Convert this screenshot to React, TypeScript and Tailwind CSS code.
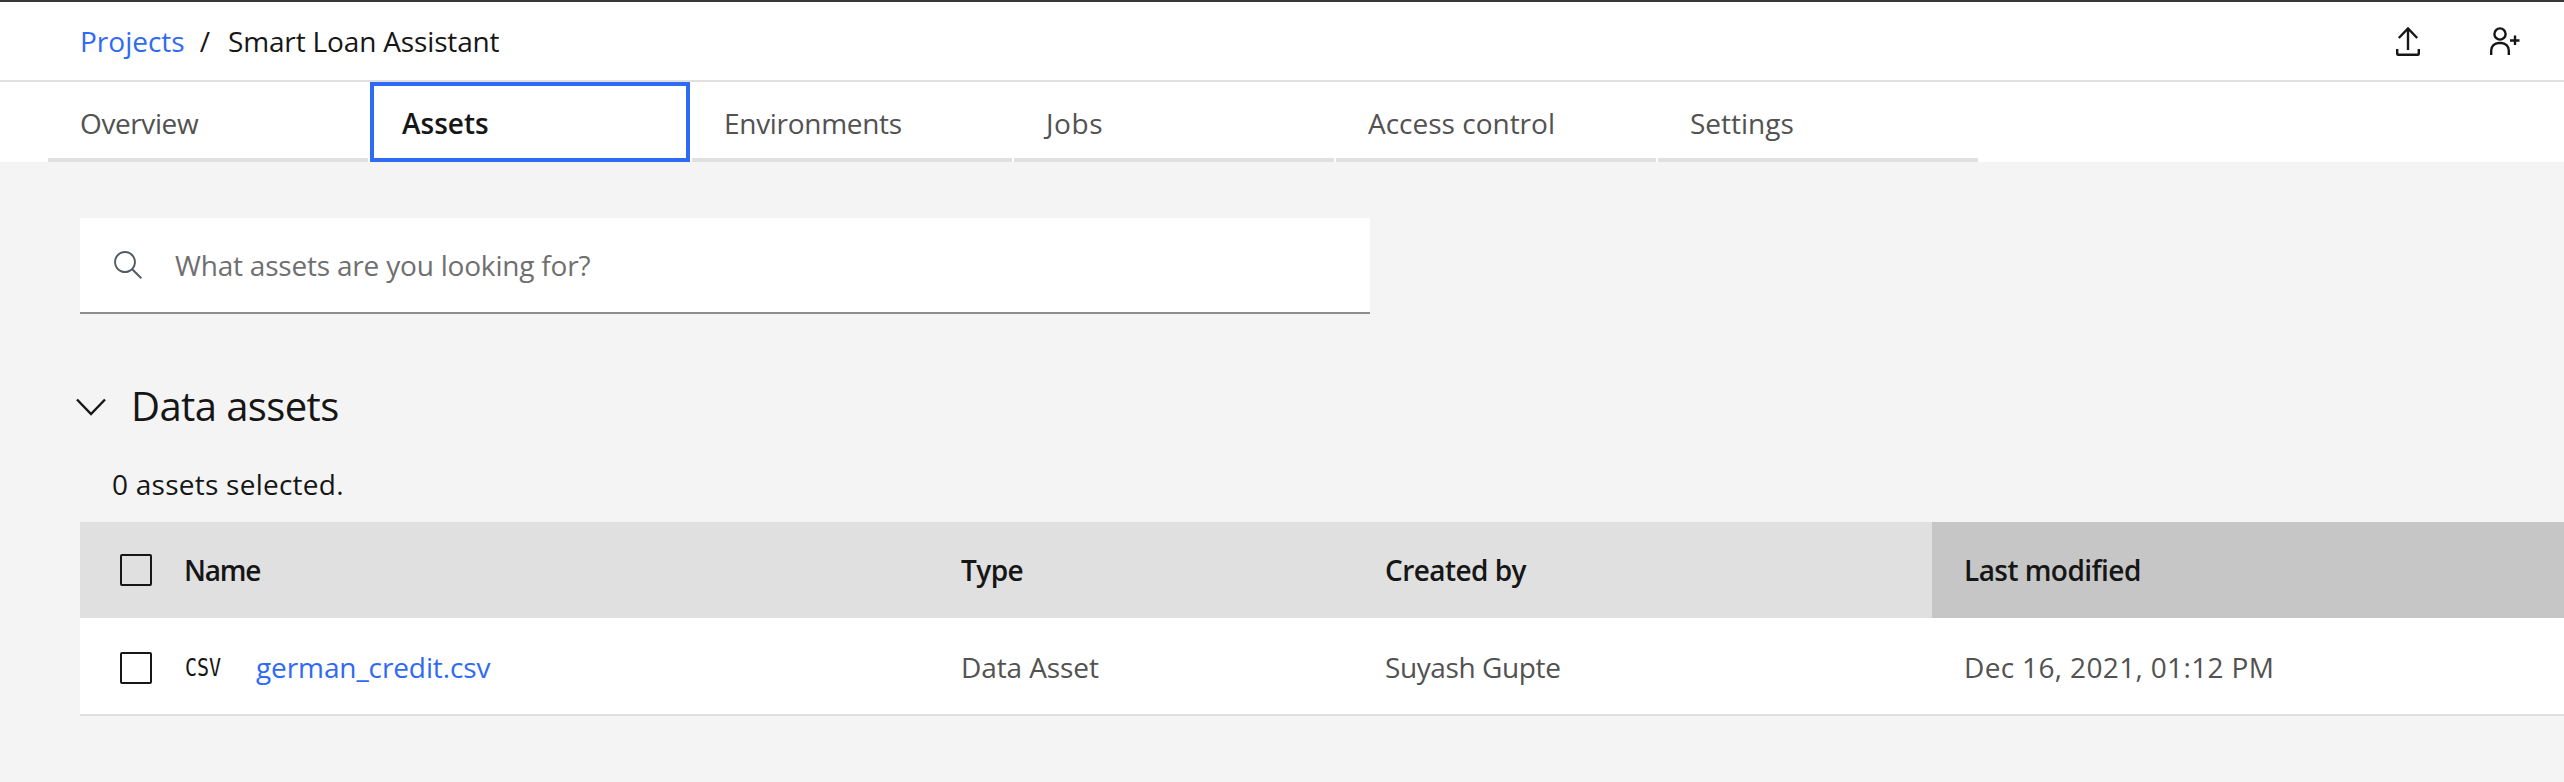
const tabs = [
  { label: "Overview", tracking: "tracking-[-0.4px]" },
  { label: "Environments", tracking: "tracking-[-0.3px]" },
  { label: "Jobs", tracking: "tracking-[0.6px]" },
  { label: "Access control", tracking: "tracking-[0px]" },
  { label: "Settings", tracking: "tracking-[0px]" },
];

function UploadIcon() {
  return (
    <svg width="40" height="40" viewBox="0 0 40 40" fill="none" stroke="#161616" strokeWidth="2.4">
      <path d="M20 7V29" />
      <path d="M10.8 17L20 7.5L29.2 17" />
      <path d="M9.2 28V32.8A1 1 0 0 0 10.2 33.8H29.8A1 1 0 0 0 30.8 32.8V28" />
    </svg>
  );
}

function UserAddIcon() {
  return (
    <svg width="40" height="40" viewBox="0 0 40 40" fill="none" stroke="#161616" strokeWidth="2.4">
      <circle cx="20" cy="13" r="5.6" />
      <path d="M11.2 34V29.5A7.5 7.5 0 0 1 18.7 22H21.3A7.5 7.5 0 0 1 28.8 29.5V34" />
      <path d="M30 19.5H39.5M35 14.5V24" />
    </svg>
  );
}

function SearchIcon() {
  return (
    <svg width="32" height="32" viewBox="0 0 16 16" fill="#525a62">
      <path d="M15,14.3L10.7,10c1.9-2.3,1.6-5.8-0.7-7.7S4.2,0.7,2.3,3S0.7,8.8,3,10.7c2,1.7,5,1.7,7,0l4.3,4.3L15,14.3z M2,6.5 C2,4,4,2,6.5,2S11,4,11,6.5S9,11,6.5,11S2,9,2,6.5z" />
    </svg>
  );
}

function Checkbox() {
  return <div className="h-8 w-8 rounded-[2px] border-2 border-[#161616]" />;
}

function Tab({ label, tracking }: { label: string; tracking: string }) {
  return (
    <div className={`flex w-[320px] items-center border-b-4 border-[#e0e0e0] pt-[6px] pl-[32px] text-[#525252] ${tracking}`}>
      {label}
    </div>
  );
}

export default function App() {
  return (
    <div className="flex min-h-[782px] flex-col overflow-hidden bg-[#f4f4f4] font-['Open_Sans',sans-serif] text-[28px] text-[#161616]">
      <header className="flex h-[82px] items-center justify-between border-t-2 border-b-2 border-t-[#393939] border-b-[#e0e0e0] bg-white pr-[44px] pl-[80px]">
        <div className="flex items-center">
          <a className="text-[#2f6af5]">Projects</a>
          <span className="mr-[18px] ml-[15px]">/</span>
          <span className="tracking-[-0.15px]">Smart Loan Assistant</span>
        </div>
        <div className="flex items-center gap-[52px]">
          <UploadIcon />
          <UserAddIcon />
        </div>
      </header>

      <nav className="flex h-[80px] gap-[2px] bg-white pl-[48px]">
        <Tab {...tabs[0]} />
        <div className="flex w-[320px] items-center border-4 border-[#2f6af5] pt-[2px] pl-[28px] font-semibold">
          Assets
        </div>
        {tabs.slice(1).map((t) => (
          <Tab key={t.label} {...t} />
        ))}
      </nav>

      <main className="flex flex-col pt-[56px]">
        <div className="ml-[80px] flex h-[96px] w-[1290px] items-center gap-[31px] border-b-2 border-[#8d8d8d] bg-white pl-[32px]">
          <SearchIcon />
          <span className="tracking-[-0.2px] text-[#6f6f6f]">What assets are you looking for?</span>
        </div>

        <div className="mt-[64px] flex items-center pl-[76px]">
          <svg width="30" height="18" viewBox="0 0 30 18" fill="none" stroke="#161616" strokeWidth="2.4">
            <path d="M1 1.5L15 16L29 1.5" />
          </svg>
          <h2 className="ml-[25px] pb-[2px] text-[40px] leading-[56px] tracking-[-0.6px]">Data assets</h2>
        </div>

        <p className="mt-[30px] pl-[112px] leading-[36px] tracking-[0.25px]">0 assets selected.</p>

        <div className="mt-[20px] ml-[80px]">
          <div className="grid h-[96px] grid-cols-[849px_424px_579px_1fr] items-center bg-[#e0e0e0] font-semibold tracking-[-0.55px]">
            <div className="flex items-center gap-[32px] pl-[40px]">
              <Checkbox />
              <span className="tracking-[-1.2px]">Name</span>
            </div>
            <div className="pl-[32px]">Type</div>
            <div className="pl-[32px]">Created by</div>
            <div className="flex h-full items-center bg-[#c6c6c6] pl-[32px]">Last modified</div>
          </div>
          <div className="grid h-[98px] grid-cols-[849px_424px_579px_1fr] items-center border-b-2 border-[#e0e0e0] bg-white tracking-[-0.1px] text-[#525252]">
            <div className="flex items-center pt-[4px] pl-[40px]">
              <Checkbox />
              <span className="ml-[33px] w-[71px] origin-left scale-x-[0.8] font-['DejaVu_Sans_Mono',monospace] text-[25px] tracking-[0px] text-[#161616]">CSV</span>
              <a className="pb-[2px] text-[#2f6af5]">german_credit.csv</a>
            </div>
            <div className="pt-[2px] pl-[32px]">Data Asset</div>
            <div className="pt-[2px] pl-[32px] tracking-[-0.4px]">Suyash Gupte</div>
            <div className="pt-[2px] pl-[32px] tracking-[0.35px]">Dec 16, 2021, 01:12 PM</div>
          </div>
        </div>
      </main>
    </div>
  );
}
